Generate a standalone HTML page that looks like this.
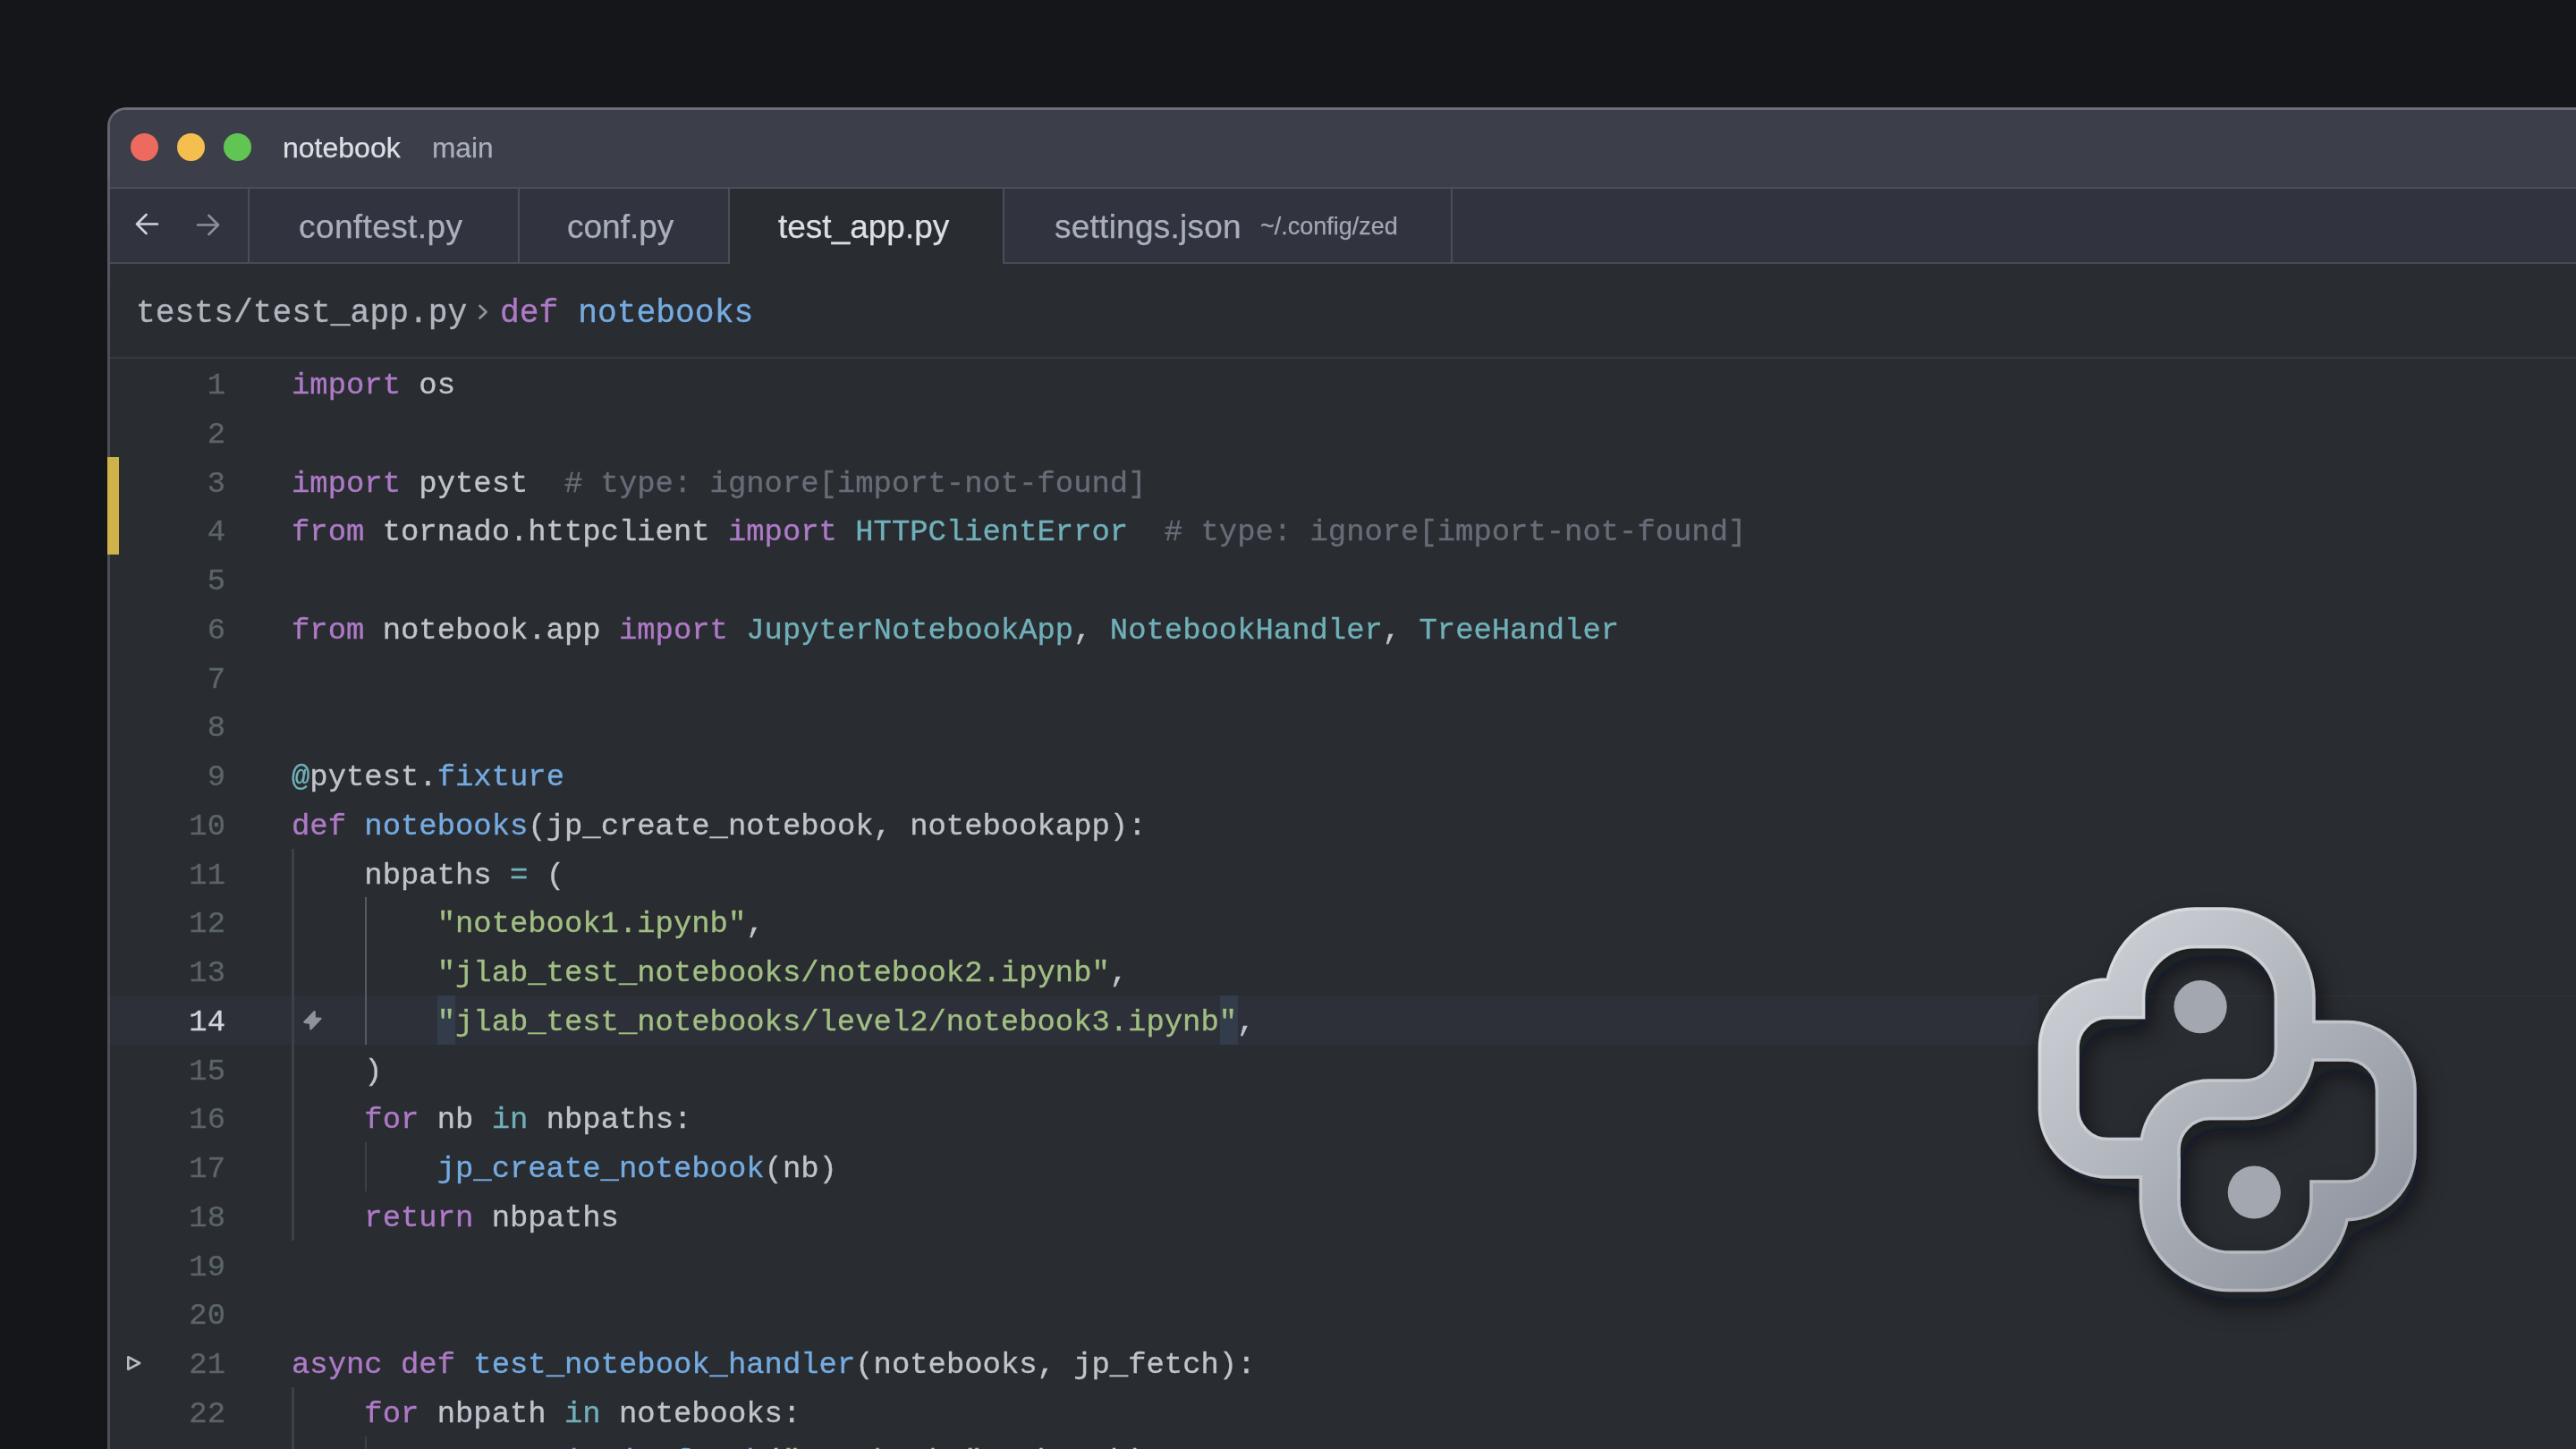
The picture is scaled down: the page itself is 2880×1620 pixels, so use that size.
<!DOCTYPE html>
<html><head><meta charset="utf-8">
<style>
html,body{margin:0;padding:0;width:2880px;height:1620px;overflow:hidden;background:#151619;}
.ln,.num,.sans,.mono{will-change:transform}
.ln span,.num,.mono span,.mono{-webkit-text-stroke:0.35px currentColor}
.sans{-webkit-text-stroke:0.25px currentColor}
*{box-sizing:border-box}
.a{position:absolute}
.win{position:absolute;left:120px;top:120px;width:2800px;height:1560px;border-left:3px solid #62656f;border-top:3px solid #6c6f79;border-radius:21px 0 0 0;background:#292c31;}
.lb{position:absolute;left:120px;top:200px;width:3px;height:1420px;background:linear-gradient(#5c5f69,#4b4e54 200px)}
.title{position:absolute;left:123px;top:123px;width:2800px;height:86px;background:#3c3f4a;border-radius:18px 0 0 0}
.tl{position:absolute;width:31px;height:31px;border-radius:50%;top:148.5px}
.sans{font-family:"Liberation Sans",sans-serif;white-space:pre}
.mono{font-family:"Liberation Mono",monospace;white-space:pre}
.tabbar{position:absolute;left:123px;top:209px;width:2800px;height:86px;background:#31343f;border-top:2px solid #4a4e58;border-bottom:2px solid #484c56}
.vline{position:absolute;width:2px;background:#4a4e58}
.activetab{position:absolute;left:816px;top:211px;width:306px;height:84px;background:#292c31}
.crumbs{position:absolute;left:123px;top:295px;width:2800px;height:106px;background:#292c31;border-bottom:2px solid #363a40}
.ln{position:absolute;left:326.2px;font-family:"Liberation Mono",monospace;font-size:33.895px;line-height:54.75px;white-space:pre;color:#c8ccd4;height:54.75px}
.num{position:absolute;left:148px;width:104px;text-align:right;font-family:"Liberation Mono",monospace;font-size:33.895px;line-height:54.75px;color:#5b6467}
.num.act{color:#d0d4da}
.guide{position:absolute;width:2.6px;background:#3d4147}
.gact{background:#555a62}
.actline{position:absolute;left:123px;top:1112.80px;width:2800px;height:54.75px;background:#2d3038}
.qhl{position:absolute;top:1112.80px;width:20.34px;height:54.75px;background:#323c4a}
.gitbar{position:absolute;left:120px;top:510.6px;width:13px;height:109.5px;background:#cfb24a}
</style></head><body>
<div class="win"></div>
<div class="lb"></div>
<div class="title"></div>
<div class="tl" style="left:146px;background:#ed6a5e"></div>
<div class="tl" style="left:198px;background:#f4bf4f"></div>
<div class="tl" style="left:250px;background:#61c554"></div>
<div class="a sans" style="left:316px;top:144.5px;font-size:32px;line-height:40px;color:#dce0e5">notebook</div>
<div class="a sans" style="left:482.5px;top:144.5px;font-size:31.6px;line-height:40px;color:#a9afbc">main</div>

<div class="tabbar"></div>
<div class="activetab"></div>
<div class="vline" style="left:277px;top:211px;height:83px"></div>
<div class="vline" style="left:579px;top:211px;height:83px"></div>
<div class="vline" style="left:814px;top:211px;height:84px"></div>
<div class="vline" style="left:1121px;top:211px;height:84px"></div>
<div class="vline" style="left:1622px;top:211px;height:83px"></div>

<svg class="a" style="left:140px;top:230px" width="150" height="45" viewBox="0 0 150 45">
  <path d="M13 20.5 H36 M23.5 10 L13 20.5 L23.5 31" stroke="#d0d4da" stroke-width="2.6" fill="none" stroke-linecap="round" stroke-linejoin="round"/>
  <path d="M81 21.5 H104 M93.5 11 L104 21.5 L93.5 32" stroke="#8a8f99" stroke-width="2.6" fill="none" stroke-linecap="round" stroke-linejoin="round"/>
</svg>

<div class="a sans" style="left:334px;top:232px;font-size:37px;line-height:44px;color:#a9afbc;letter-spacing:0.4px">conftest.py</div>
<div class="a sans" style="left:634px;top:232px;font-size:37px;line-height:44px;color:#a9afbc">conf.py</div>
<div class="a sans" style="left:870px;top:232px;font-size:37px;line-height:44px;color:#dce0e5">test_app.py</div>
<div class="a sans" style="left:1179px;top:232px;font-size:37px;line-height:44px;color:#a9afbc;letter-spacing:0.25px">settings.json</div>
<div class="a sans" style="left:1409px;top:235.5px;font-size:27px;line-height:34px;color:#a2a8b3">~/.config/zed</div>

<div class="crumbs"></div>
<div class="a mono" style="left:152px;top:329px;font-size:36.3px;line-height:44px;color:#b0b5be">tests/test_app.py</div>
<svg class="a" style="left:530px;top:336px" width="20" height="26" viewBox="0 0 20 26"><path d="M6.5 6 L13.5 12.8 L6.5 19.6" fill="none" stroke="#8d929b" stroke-width="2.8" stroke-linecap="round" stroke-linejoin="round"/></svg>
<div class="a mono" style="left:559px;top:329px;font-size:36.3px;line-height:44px;"><span style="color:#ae7ac7">def</span> <span style="color:#75abe1">notebooks</span></div>

<div class="actline"></div>
<div class="qhl" style="left:488.92px"></div>
<div class="qhl" style="left:1363.54px"></div>
<div class="gitbar"></div>
<div class="guide" style="left:326.20px;top:948.55px;height:438.00px"></div>
<div class="guide gact" style="left:407.56px;top:1003.30px;height:164.25px"></div>
<div class="guide" style="left:407.56px;top:1277.05px;height:54.75px"></div>
<div class="guide" style="left:326.20px;top:1550.80px;height:164.25px"></div>
<div class="guide" style="left:407.56px;top:1605.55px;height:109.50px"></div>
<div class="num" style="top:404.05px">1</div>
<div class="num" style="top:458.80px">2</div>
<div class="num" style="top:513.55px">3</div>
<div class="num" style="top:568.30px">4</div>
<div class="num" style="top:623.05px">5</div>
<div class="num" style="top:677.80px">6</div>
<div class="num" style="top:732.55px">7</div>
<div class="num" style="top:787.30px">8</div>
<div class="num" style="top:842.05px">9</div>
<div class="num" style="top:896.80px">10</div>
<div class="num" style="top:951.55px">11</div>
<div class="num" style="top:1006.30px">12</div>
<div class="num" style="top:1061.05px">13</div>
<div class="num act" style="top:1115.80px">14</div>
<div class="num" style="top:1170.55px">15</div>
<div class="num" style="top:1225.30px">16</div>
<div class="num" style="top:1280.05px">17</div>
<div class="num" style="top:1334.80px">18</div>
<div class="num" style="top:1389.55px">19</div>
<div class="num" style="top:1444.30px">20</div>
<div class="num" style="top:1499.05px">21</div>
<div class="num" style="top:1553.80px">22</div>
<div class="num" style="top:1608.55px">23</div>
<div class="ln" style="top:404.05px"><span style="color:#ae7ac7">import</span><span style="color:#c0c4cc"> os</span></div>
<div class="ln" style="top:458.80px"></div>
<div class="ln" style="top:513.55px"><span style="color:#ae7ac7">import</span><span style="color:#c0c4cc"> pytest  </span><span style="color:#676c77"># type: ignore[import-not-found]</span></div>
<div class="ln" style="top:568.30px"><span style="color:#ae7ac7">from</span><span style="color:#c0c4cc"> tornado.httpclient </span><span style="color:#ae7ac7">import</span><span style="color:#c0c4cc"> </span><span style="color:#70b0b9">HTTPClientError</span><span style="color:#c0c4cc">  </span><span style="color:#676c77"># type: ignore[import-not-found]</span></div>
<div class="ln" style="top:623.05px"></div>
<div class="ln" style="top:677.80px"><span style="color:#ae7ac7">from</span><span style="color:#c0c4cc"> notebook.app </span><span style="color:#ae7ac7">import</span><span style="color:#c0c4cc"> </span><span style="color:#70b0b9">JupyterNotebookApp</span><span style="color:#c0c4cc">, </span><span style="color:#70b0b9">NotebookHandler</span><span style="color:#c0c4cc">, </span><span style="color:#70b0b9">TreeHandler</span></div>
<div class="ln" style="top:732.55px"></div>
<div class="ln" style="top:787.30px"></div>
<div class="ln" style="top:842.05px"><span style="color:#70b0b9">@</span><span style="color:#c0c4cc">pytest.</span><span style="color:#75abe1">fixture</span></div>
<div class="ln" style="top:896.80px"><span style="color:#ae7ac7">def</span><span style="color:#c0c4cc"> </span><span style="color:#75abe1">notebooks</span><span style="color:#c0c4cc">(jp_create_notebook, notebookapp):</span></div>
<div class="ln" style="top:951.55px"><span style="color:#c0c4cc">    nbpaths </span><span style="color:#70b0b9">=</span><span style="color:#c0c4cc"> (</span></div>
<div class="ln" style="top:1006.30px"><span style="color:#c0c4cc">        </span><span style="color:#a2bf83">&quot;notebook1.ipynb&quot;</span><span style="color:#c0c4cc">,</span></div>
<div class="ln" style="top:1061.05px"><span style="color:#c0c4cc">        </span><span style="color:#a2bf83">&quot;jlab_test_notebooks/notebook2.ipynb&quot;</span><span style="color:#c0c4cc">,</span></div>
<div class="ln" style="top:1115.80px"><span style="color:#c0c4cc">        </span><span style="color:#a2bf83">&quot;jlab_test_notebooks/level2/notebook3.ipynb&quot;</span><span style="color:#c0c4cc">,</span></div>
<div class="ln" style="top:1170.55px"><span style="color:#c0c4cc">    )</span></div>
<div class="ln" style="top:1225.30px"><span style="color:#c0c4cc">    </span><span style="color:#ae7ac7">for</span><span style="color:#c0c4cc"> nb </span><span style="color:#70b0b9">in</span><span style="color:#c0c4cc"> nbpaths:</span></div>
<div class="ln" style="top:1280.05px"><span style="color:#c0c4cc">        </span><span style="color:#75abe1">jp_create_notebook</span><span style="color:#c0c4cc">(nb)</span></div>
<div class="ln" style="top:1334.80px"><span style="color:#c0c4cc">    </span><span style="color:#ae7ac7">return</span><span style="color:#c0c4cc"> nbpaths</span></div>
<div class="ln" style="top:1389.55px"></div>
<div class="ln" style="top:1444.30px"></div>
<div class="ln" style="top:1499.05px"><span style="color:#ae7ac7">async</span><span style="color:#c0c4cc"> </span><span style="color:#ae7ac7">def</span><span style="color:#c0c4cc"> </span><span style="color:#75abe1">test_notebook_handler</span><span style="color:#c0c4cc">(notebooks, jp_fetch):</span></div>
<div class="ln" style="top:1553.80px"><span style="color:#c0c4cc">    </span><span style="color:#ae7ac7">for</span><span style="color:#c0c4cc"> nbpath </span><span style="color:#70b0b9">in</span><span style="color:#c0c4cc"> notebooks:</span></div>
<div class="ln" style="top:1606.55px"><span style="color:#c0c4cc">        r </span><span style="color:#70b0b9">=</span><span style="color:#c0c4cc"> </span><span style="color:#ae7ac7">await</span><span style="color:#c0c4cc"> </span><span style="color:#75abe1">jp_fetch</span><span style="color:#c0c4cc">(</span><span style="color:#a2bf83">&quot;notebooks&quot;</span><span style="color:#c0c4cc">, nbpath)</span></div>

<!-- lightning -->
<svg class="a" style="left:336px;top:1126px" width="28" height="30" viewBox="0 0 28 30">
  <path d="M15.6 5 L4.3 16.8 L11 17.8 L11.4 24.4 L22.5 12.8 L15.9 12.3 Z" fill="#8e929b" stroke="#8e929b" stroke-width="2.2" stroke-linejoin="round"/>
</svg>
<!-- fold triangle -->
<svg class="a" style="left:138px;top:1512px" width="24" height="26" viewBox="0 0 24 26">
  <path d="M5.3 5.2 L18.2 12 L5.3 18.8 Z" fill="none" stroke="#b6bac3" stroke-width="2.6" stroke-linejoin="round"/>
</svg>


<div class="a" style="left:2279px;top:1112.80px;width:610px;height:54.75px;background:#292c31"></div>
<div class="a" style="left:2279px;top:1113px;width:610px;height:1.5px;background:#2d3036"></div>
<svg class="a" style="left:0;top:0;overflow:visible" width="2880" height="1620">
<defs>
<linearGradient id="lg" gradientUnits="userSpaceOnUse" x1="-200" y1="-210" x2="200" y2="210">
<stop offset="0" stop-color="#d3d6db"/><stop offset="1" stop-color="#878d97"/></linearGradient>
<linearGradient id="lgo" gradientUnits="userSpaceOnUse" x1="-200" y1="-210" x2="200" y2="210">
<stop offset="0" stop-color="#e0e3e7"/><stop offset="1" stop-color="#a6abb3"/></linearGradient>
<filter id="sh" x="-30%" y="-30%" width="160%" height="160%"><feGaussianBlur in="SourceAlpha" stdDeviation="13"/><feOffset dx="6" dy="15" result="b"/><feFlood flood-color="#0e0f12" flood-opacity="0.6"/><feComposite in2="b" operator="in"/><feMerge><feMergeNode/><feMergeNode in="SourceGraphic"/></feMerge></filter>
</defs>
<g transform="translate(2490.2,1229.3)">
<g filter="url(#sh)">
<path d="M -75.5,65.5 L -133.5,65.5 A 55 55 0 0 1 -188.5,10.5 L -188.5,-58 A 55 55 0 0 1 -133.5,-113 L -115,-113 A 79 79 0 0 1 -36,-192 L -3.5,-192 A 79 79 0 0 1 75.5,-113 L 75.5,-65.5 L 75.5,-56 A 56 56 0 0 1 19.5,0 L -19.5,0 A 56 56 0 0 0 -75.5,56 L -75.5,65.5 Z" fill="none" stroke="url(#lgo)" stroke-width="46" stroke-linejoin="miter" stroke-miterlimit="4"/>
<path d="M 75.5,-65.5 L 133.5,-65.5 A 55 55 0 0 1 188.5,-10.5 L 188.5,58 A 55 55 0 0 1 133.5,113 L 115,113 A 79 79 0 0 1 36,192 L 3.5,192 A 79 79 0 0 1 -75.5,113 L -75.5,65.5" fill="none" stroke="url(#lgo)" stroke-width="46" stroke-linejoin="miter" stroke-miterlimit="4"/>
</g>
<path d="M -75.5,65.5 L -133.5,65.5 A 55 55 0 0 1 -188.5,10.5 L -188.5,-58 A 55 55 0 0 1 -133.5,-113 L -115,-113 A 79 79 0 0 1 -36,-192 L -3.5,-192 A 79 79 0 0 1 75.5,-113 L 75.5,-65.5 L 75.5,-56 A 56 56 0 0 1 19.5,0 L -19.5,0 A 56 56 0 0 0 -75.5,56 L -75.5,65.5 Z" fill="none" stroke="url(#lg)" stroke-width="39.0" stroke-linejoin="miter" stroke-miterlimit="4"/>
<path d="M 75.5,-65.5 L 133.5,-65.5 A 55 55 0 0 1 188.5,-10.5 L 188.5,58 A 55 55 0 0 1 133.5,113 L 115,113 A 79 79 0 0 1 36,192 L 3.5,192 A 79 79 0 0 1 -75.5,113 L -75.5,65.5" fill="none" stroke="url(#lg)" stroke-width="39.0" stroke-linejoin="miter" stroke-miterlimit="4"/>
<circle cx="-30.1" cy="-103.7" r="29.6" fill="#a3a7b0"/>
<circle cx="30.1" cy="103.7" r="29.6" fill="#a3a7b0"/>
</g></svg>
</body></html>
